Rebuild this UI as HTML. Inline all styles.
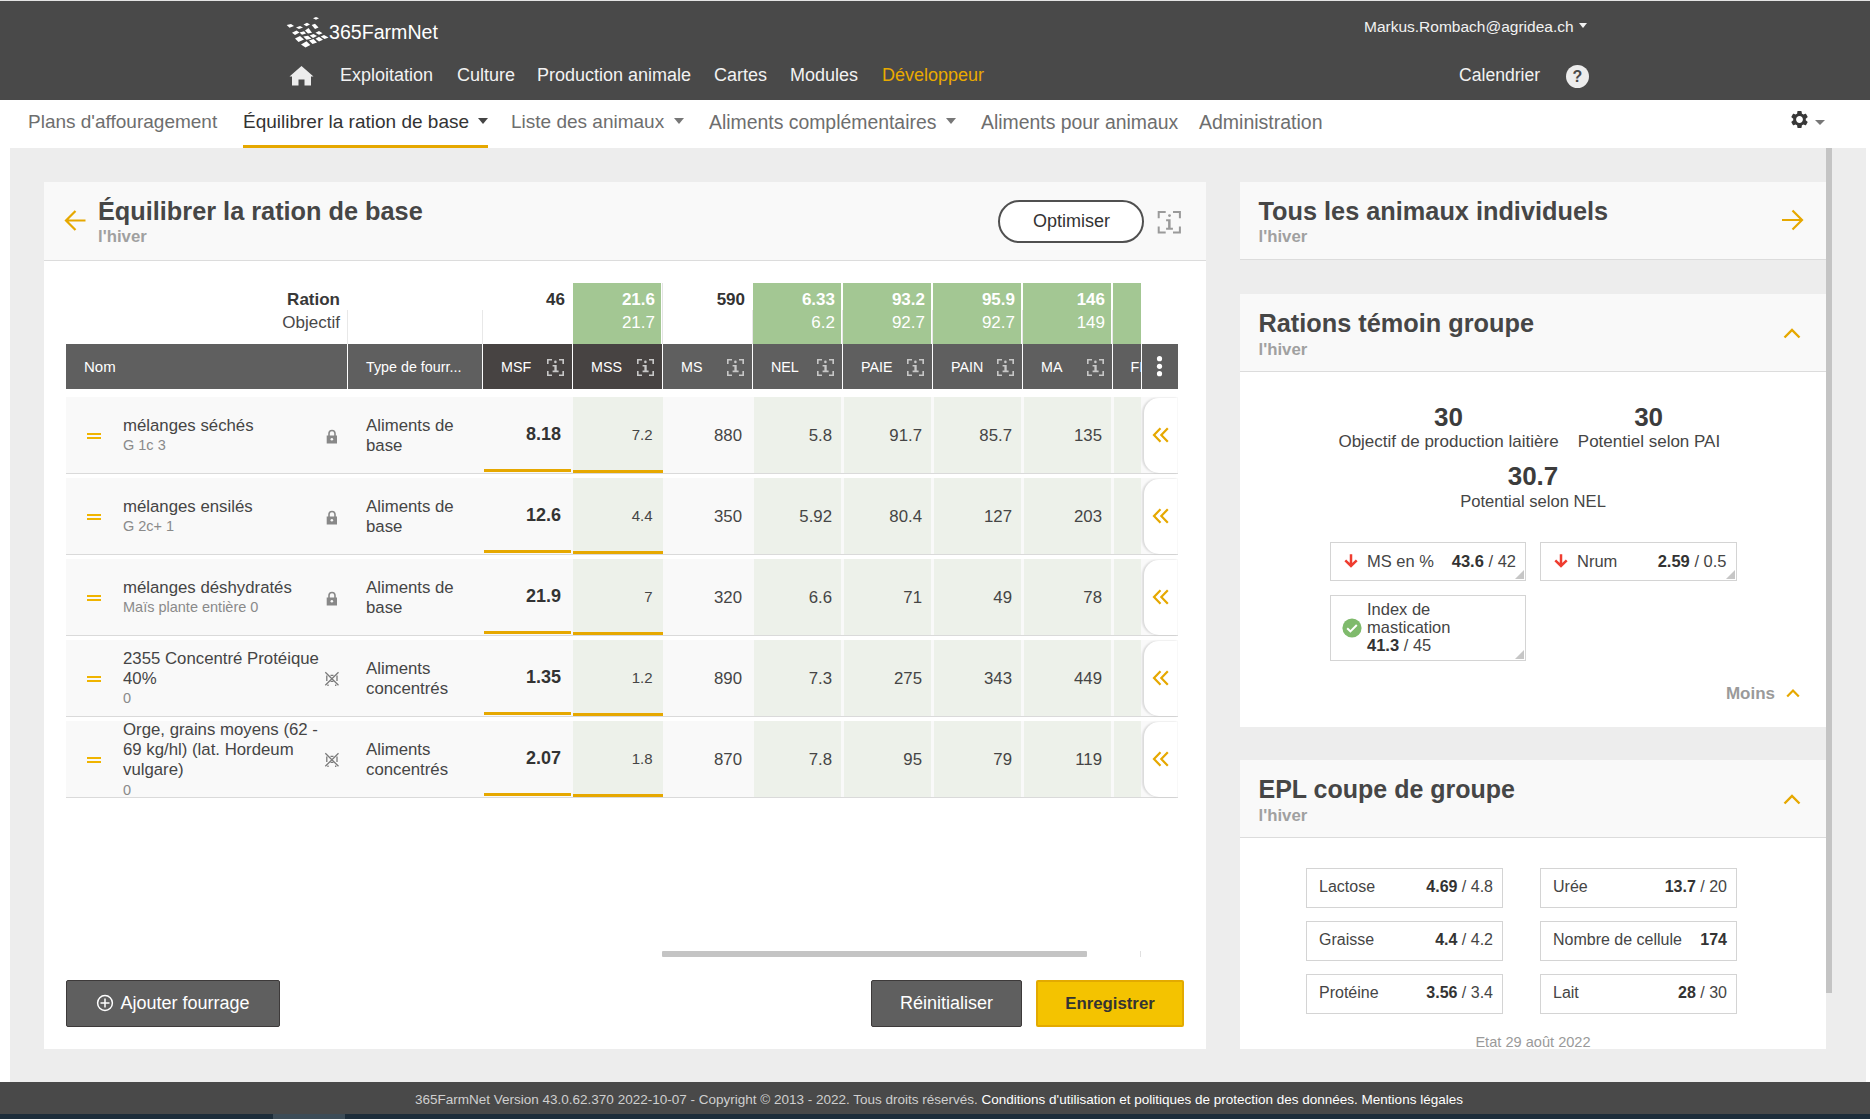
<!DOCTYPE html>
<html><head><meta charset="utf-8">
<style>
*{margin:0;padding:0;box-sizing:border-box}
html,body{width:1870px;height:1119px;overflow:hidden;background:#fff;font-family:"Liberation Sans",sans-serif;color:#444}
.a{position:absolute;white-space:nowrap}
#top{position:absolute;left:0;top:0;width:1870px;height:100px;background:#494949;border-top:1px solid #e4e4e4}
.nav{font-size:18px;color:#f2f2f2;line-height:20px}
.sub{font-size:19px;color:#6e6e6e;line-height:22px}
.caret{position:absolute;width:0;height:0;border-left:5.5px solid transparent;border-right:5.5px solid transparent;border-top:6px solid #777}
#gray{position:absolute;left:10px;top:148px;width:1856px;height:934px;background:#ededed}
#main{position:absolute;left:44px;top:182px;width:1162px;height:867px;background:#fff}
#mainhd{position:absolute;left:0;top:0;width:1162px;height:79px;background:#f9f9f9;border-bottom:1px solid #dcdcdc}
.ttl{font-size:25.3px;font-weight:700;color:#464646;line-height:30px}
.hiv{font-size:16.8px;font-weight:700;color:#a0a0a0;line-height:20px}
.card{position:absolute;left:1240px;width:586px;background:#fff}
.cardhd{position:absolute;left:0;top:0;width:586px;height:78px;background:#f9f9f9;border-bottom:1px solid #dcdcdc}
</style></head><body>
<div id="top">
  <svg class="a" style="left:284px;top:13px" width="50" height="36" viewBox="0 0 50 36"><g fill="#fff">
  <polygon points="29,4.3 32,3 35,4.3 32,5.8"/>
  <polygon points="2.7,11 7,10 10,12 5.5,13.8"/>
  <polygon points="12,13.4 16,12 19,13.5 15,15"/>
  <polygon points="19.5,10.5 23,8.7 26,10.5 22.5,12.2"/>
  <polygon points="27.7,11 31,9.7 34.5,13.5 31,15"/>
  <polygon points="8,18.7 12.5,16.5 15.5,18.5 11,21"/>
  <polygon points="15.5,18.5 20,17.3 22,19.5 18,20.8"/>
  <polygon points="21,16.5 24.5,14 28,18.7 24,19.5"/>
  <polygon points="31.5,18.7 35,17 38.5,19.3 35,20.8"/>
  <polygon points="11,24.5 16,22 20,25.5 14.5,28"/>
  <polygon points="19.3,22.5 24,21.7 27.5,24.7 22.5,25.8"/>
  <polygon points="25.7,21.5 29.5,20 33,22 29,24"/>
  <polygon points="36.7,22.5 40,21 44.5,23.5 40.5,25"/>
  <polygon points="25,26.5 29.5,25 33,28.5 28.5,30"/>
  <polygon points="31.5,24.7 35,22.7 39,25.7 35,27.5"/>
  <polygon points="17,30.5 22.5,27.2 26.3,31 21.5,33.5"/>
  </g></svg>
  <div class="a" style="left:329px;top:20px;font-size:19.6px;line-height:22px;color:#fff">365FarmNet</div>
  <svg class="a" style="left:289px;top:64px" width="25" height="21" viewBox="0 0 25 21"><path fill="#ececec" d="M12.5 1 L0.5 11.5 L3 11.5 L3 20.5 L9.5 20.5 L9.5 14.5 L15.5 14.5 L15.5 20.5 L22 20.5 L22 11.5 L24.5 11.5 Z"/></svg>
  <div class="a nav" style="left:340px;top:64px">Exploitation</div>
  <div class="a nav" style="left:457px;top:64px">Culture</div>
  <div class="a nav" style="left:537px;top:64px">Production animale</div>
  <div class="a nav" style="left:714px;top:64px">Cartes</div>
  <div class="a nav" style="left:790px;top:64px">Modules</div>
  <div class="a nav" style="left:882px;top:64px;color:#e9aa00">Développeur</div>
  <div class="a" style="left:1364px;top:17px;font-size:15.5px;line-height:18px;color:#f2f2f2">Markus.Rombach@agridea.ch</div>
  <div class="caret" style="left:1579px;top:22px;border-top-color:#f2f2f2;border-left-width:4px;border-right-width:4px;border-top-width:5px"></div>
  <div class="a nav" style="left:1459px;top:64px;font-size:17.6px">Calendrier</div>
  <div class="a" style="left:1566px;top:64px;width:23px;height:23px;border-radius:50%;background:#ececec;color:#494949;font-weight:700;font-size:16px;line-height:23px;text-align:center">?</div>
</div>
<div id="subnav">
  <div class="a sub" style="left:28px;top:111px">Plans d'affouragement</div>
  <div class="a sub" style="left:243px;top:111px;color:#333">Équilibrer la ration de base</div>
  <div class="caret" style="left:478px;top:118px;border-top-color:#444"></div>
  <div class="a" style="left:243px;top:145px;width:245px;height:3px;background:#e6a800"></div>
  <div class="a sub" style="left:511px;top:111px">Liste des animaux</div>
  <div class="caret" style="left:674px;top:118px"></div>
  <div class="a sub" style="left:709px;top:111px;font-size:19.4px">Aliments complémentaires</div>
  <div class="caret" style="left:946px;top:118px"></div>
  <div class="a sub" style="left:981px;top:111px;font-size:19.4px">Aliments pour animaux</div>
  <div class="a sub" style="left:1199px;top:111px;font-size:19.5px">Administration</div>
  <svg class="a" style="left:1789px;top:109px" width="21" height="21" viewBox="0 0 24 24"><path fill="#383838" d="M19.14 12.94c.04-.3.06-.61.06-.94 0-.32-.02-.64-.07-.94l2.03-1.58a.49.49 0 0 0 .12-.61l-1.92-3.32a.488.488 0 0 0-.59-.22l-2.39.96c-.5-.38-1.03-.7-1.62-.94l-.36-2.54a.484.484 0 0 0-.48-.41h-3.84c-.24 0-.43.17-.47.41l-.36 2.54c-.59.24-1.13.57-1.62.94l-2.39-.96c-.22-.08-.47 0-.59.22L2.74 8.87c-.12.21-.08.47.12.61l2.03 1.58c-.05.3-.09.63-.09.94s.02.64.07.94l-2.03 1.58a.49.49 0 0 0-.12.61l1.92 3.32c.12.22.37.29.59.22l2.39-.96c.5.38 1.03.7 1.62.94l.36 2.54c.05.24.24.41.48.41h3.84c.24 0 .44-.17.47-.41l.36-2.54c.59-.24 1.13-.56 1.62-.94l2.39.96c.22.08.47 0 .59-.22l1.92-3.32c.12-.22.07-.47-.12-.61l-2.01-1.58zM12 15.9c-2.15 0-3.9-1.75-3.9-3.9s1.75-3.9 3.9-3.9 3.9 1.75 3.9 3.9-1.75 3.9-3.9 3.9z"/></svg>
  <div class="caret" style="left:1815px;top:120px;border-left-width:5px;border-right-width:5px;border-top-width:5px"></div>
</div>
<div id="gray"></div>
<div id="main">
  <div id="mainhd">
    <svg class="a" style="left:20px;top:27px" width="23" height="23" viewBox="0 0 23 23"><path d="M11.5 2 L2 11.5 L11.5 21 M2 11.5 L21.5 11.5" stroke="#e6a800" stroke-width="2.2" fill="none"/></svg>
    <div class="a ttl" style="left:54px;top:14px">Équilibrer la ration de base</div>
    <div class="a hiv" style="left:54px;top:45px">l'hiver</div>
    <div class="a" style="left:954px;top:18px;width:146px;height:43px;border:2px solid #505050;border-radius:22px;background:#fff;font-size:18px;line-height:39px;text-align:center;color:#333;padding-left:1px">Optimiser</div>
    <svg class="a" style="left:1113px;top:28px" width="25" height="25" viewBox="0 0 25 25"><g fill="none" stroke="#9a9a9a" stroke-width="2"><path d="M1.7 8.2V1.9h7M16 1.9h6.9v6.3M22.9 16.4v6.1H16M8.7 22.5H1.7v-6.1"/></g><g fill="#9a9a9a"><circle cx="12.5" cy="5.6" r="1.4"/><path d="M9.1 9.2h4.5v8.5h2.3v2H9.1v-2h2V11.2h-2z"/></g></svg>
  </div>
</div>
<div class="a" style="left:-60px;width:400px;text-align:right;top:288.61px;font-size:17px;line-height:21px;color:#383838;font-weight:700">Ration</div>
<div class="a" style="left:-60px;width:400px;text-align:right;top:311.61px;font-size:17px;line-height:21px;color:#484848">Objectif</div>
<div class="a" style="left:347px;top:310px;width:1px;height:34px;background:#e8e8e8"></div>
<div class="a" style="left:482px;top:310px;width:1px;height:34px;background:#e8e8e8"></div>
<div class="a" style="left:752px;top:310px;width:1px;height:34px;background:#e8e8e8"></div>
<div class="a" style="left:842px;top:310px;width:1px;height:34px;background:#e8e8e8"></div>
<div class="a" style="left:932px;top:310px;width:1px;height:34px;background:#e8e8e8"></div>
<div class="a" style="left:1022px;top:310px;width:1px;height:34px;background:#e8e8e8"></div>
<div class="a" style="left:1112px;top:310px;width:1px;height:34px;background:#e8e8e8"></div>
<div class="a" style="left:662px;top:283px;width:1px;height:61px;background:#e4e4e4"></div>
<div class="a" style="left:165px;width:400px;text-align:right;top:288.61px;font-size:17px;line-height:21px;color:#333;font-weight:700">46</div>
<div class="a" style="left:573px;top:283px;width:88px;height:61px;background:#a3c793"></div>
<div class="a" style="left:255px;width:400px;text-align:right;top:288.61px;font-size:17px;line-height:21px;color:#fff;font-weight:700">21.6</div>
<div class="a" style="left:255px;width:400px;text-align:right;top:311.61px;font-size:17px;line-height:21px;color:#fff">21.7</div>
<div class="a" style="left:345px;width:400px;text-align:right;top:288.61px;font-size:17px;line-height:21px;color:#333;font-weight:700">590</div>
<div class="a" style="left:753px;top:283px;width:88px;height:61px;background:#a3c793"></div>
<div class="a" style="left:435px;width:400px;text-align:right;top:288.61px;font-size:17px;line-height:21px;color:#fff;font-weight:700">6.33</div>
<div class="a" style="left:435px;width:400px;text-align:right;top:311.61px;font-size:17px;line-height:21px;color:#fff">6.2</div>
<div class="a" style="left:843px;top:283px;width:88px;height:61px;background:#a3c793"></div>
<div class="a" style="left:525px;width:400px;text-align:right;top:288.61px;font-size:17px;line-height:21px;color:#fff;font-weight:700">93.2</div>
<div class="a" style="left:525px;width:400px;text-align:right;top:311.61px;font-size:17px;line-height:21px;color:#fff">92.7</div>
<div class="a" style="left:933px;top:283px;width:88px;height:61px;background:#a3c793"></div>
<div class="a" style="left:615px;width:400px;text-align:right;top:288.61px;font-size:17px;line-height:21px;color:#fff;font-weight:700">95.9</div>
<div class="a" style="left:615px;width:400px;text-align:right;top:311.61px;font-size:17px;line-height:21px;color:#fff">92.7</div>
<div class="a" style="left:1023px;top:283px;width:88px;height:61px;background:#a3c793"></div>
<div class="a" style="left:705px;width:400px;text-align:right;top:288.61px;font-size:17px;line-height:21px;color:#fff;font-weight:700">146</div>
<div class="a" style="left:705px;width:400px;text-align:right;top:311.61px;font-size:17px;line-height:21px;color:#fff">149</div>
<div class="a" style="left:1113px;top:283px;width:28px;height:61px;background:#a3c793"></div>
<div class="a" style="left:66px;top:344px;width:281px;height:45px;background:#5f5f5f"></div>
<div class="a" style="left:348px;top:344px;width:134px;height:45px;background:#5f5f5f"></div>
<div class="a" style="left:483px;top:344px;width:89px;height:45px;background:#474342;overflow:hidden"></div>
<div class="a" style="left:501px;top:358.05px;font-size:14.3px;line-height:18px;color:#fff">MSF</div>
<svg class="a" style="left:547px;top:359px" width="17" height="17" viewBox="0 0 17 17"><g fill="none" stroke="#c8c8c8" stroke-width="1.6"><path d="M0.8 5V0.8H5M12 0.8h4.2V5M16.2 12v4.2H12M5 16.2H0.8V12"/></g><g fill="#c8c8c8"><circle cx="8.4" cy="2.9" r="1.3"/><path d="M5.6 5.9h4.1v5.6h1.9v1.8H5.6v-1.8h1.8V7.6H5.6z"/></g></svg>
<div class="a" style="left:573px;top:344px;width:89px;height:45px;background:#474342;overflow:hidden"></div>
<div class="a" style="left:591px;top:358.05px;font-size:14.3px;line-height:18px;color:#fff">MSS</div>
<svg class="a" style="left:637px;top:359px" width="17" height="17" viewBox="0 0 17 17"><g fill="none" stroke="#c8c8c8" stroke-width="1.6"><path d="M0.8 5V0.8H5M12 0.8h4.2V5M16.2 12v4.2H12M5 16.2H0.8V12"/></g><g fill="#c8c8c8"><circle cx="8.4" cy="2.9" r="1.3"/><path d="M5.6 5.9h4.1v5.6h1.9v1.8H5.6v-1.8h1.8V7.6H5.6z"/></g></svg>
<div class="a" style="left:663px;top:344px;width:89px;height:45px;background:#5f5f5f;overflow:hidden"></div>
<div class="a" style="left:681px;top:358.05px;font-size:14.3px;line-height:18px;color:#fff">MS</div>
<svg class="a" style="left:727px;top:359px" width="17" height="17" viewBox="0 0 17 17"><g fill="none" stroke="#c8c8c8" stroke-width="1.6"><path d="M0.8 5V0.8H5M12 0.8h4.2V5M16.2 12v4.2H12M5 16.2H0.8V12"/></g><g fill="#c8c8c8"><circle cx="8.4" cy="2.9" r="1.3"/><path d="M5.6 5.9h4.1v5.6h1.9v1.8H5.6v-1.8h1.8V7.6H5.6z"/></g></svg>
<div class="a" style="left:753px;top:344px;width:89px;height:45px;background:#5f5f5f;overflow:hidden"></div>
<div class="a" style="left:771px;top:358.05px;font-size:14.3px;line-height:18px;color:#fff">NEL</div>
<svg class="a" style="left:817px;top:359px" width="17" height="17" viewBox="0 0 17 17"><g fill="none" stroke="#c8c8c8" stroke-width="1.6"><path d="M0.8 5V0.8H5M12 0.8h4.2V5M16.2 12v4.2H12M5 16.2H0.8V12"/></g><g fill="#c8c8c8"><circle cx="8.4" cy="2.9" r="1.3"/><path d="M5.6 5.9h4.1v5.6h1.9v1.8H5.6v-1.8h1.8V7.6H5.6z"/></g></svg>
<div class="a" style="left:843px;top:344px;width:89px;height:45px;background:#5f5f5f;overflow:hidden"></div>
<div class="a" style="left:861px;top:358.05px;font-size:14.3px;line-height:18px;color:#fff">PAIE</div>
<svg class="a" style="left:907px;top:359px" width="17" height="17" viewBox="0 0 17 17"><g fill="none" stroke="#c8c8c8" stroke-width="1.6"><path d="M0.8 5V0.8H5M12 0.8h4.2V5M16.2 12v4.2H12M5 16.2H0.8V12"/></g><g fill="#c8c8c8"><circle cx="8.4" cy="2.9" r="1.3"/><path d="M5.6 5.9h4.1v5.6h1.9v1.8H5.6v-1.8h1.8V7.6H5.6z"/></g></svg>
<div class="a" style="left:933px;top:344px;width:89px;height:45px;background:#5f5f5f;overflow:hidden"></div>
<div class="a" style="left:951px;top:358.05px;font-size:14.3px;line-height:18px;color:#fff">PAIN</div>
<svg class="a" style="left:997px;top:359px" width="17" height="17" viewBox="0 0 17 17"><g fill="none" stroke="#c8c8c8" stroke-width="1.6"><path d="M0.8 5V0.8H5M12 0.8h4.2V5M16.2 12v4.2H12M5 16.2H0.8V12"/></g><g fill="#c8c8c8"><circle cx="8.4" cy="2.9" r="1.3"/><path d="M5.6 5.9h4.1v5.6h1.9v1.8H5.6v-1.8h1.8V7.6H5.6z"/></g></svg>
<div class="a" style="left:1023px;top:344px;width:89px;height:45px;background:#5f5f5f;overflow:hidden"></div>
<div class="a" style="left:1041px;top:358.05px;font-size:14.3px;line-height:18px;color:#fff">MA</div>
<svg class="a" style="left:1087px;top:359px" width="17" height="17" viewBox="0 0 17 17"><g fill="none" stroke="#c8c8c8" stroke-width="1.6"><path d="M0.8 5V0.8H5M12 0.8h4.2V5M16.2 12v4.2H12M5 16.2H0.8V12"/></g><g fill="#c8c8c8"><circle cx="8.4" cy="2.9" r="1.3"/><path d="M5.6 5.9h4.1v5.6h1.9v1.8H5.6v-1.8h1.8V7.6H5.6z"/></g></svg>
<div class="a" style="left:1113px;top:344px;width:28px;height:45px;background:#5f5f5f;overflow:hidden"></div>
<div class="a" style="left:1113px;top:344px;width:28px;height:45px;overflow:hidden"><div class="a" style="left:17.5px;top:14.05px;font-size:14.3px;line-height:18px;color:#fff">FI</div></div>
<div class="a" style="left:1142px;top:344px;width:36px;height:45px;background:#5f5f5f"></div>
<svg class="a" style="left:1150px;top:350px" width="20" height="30" viewBox="0 0 20 30"><g fill="#fff"><circle cx="9.5" cy="8.7" r="2.6"/><circle cx="9.5" cy="16.3" r="2.6"/><circle cx="9.5" cy="23.7" r="2.6"/></g></svg>
<div class="a" style="left:84px;top:357.30px;font-size:15px;line-height:19px;color:#fff">Nom</div>
<div class="a" style="left:366px;top:358.05px;font-size:14.3px;line-height:18px;color:#fff">Type de fourr...</div>
<div class="a" style="left:66px;top:397px;width:1112px;height:76px;background:#f9f9f9"></div>
<div class="a" style="left:66px;top:473px;width:1112px;height:1px;background:#dadada"></div>
<div class="a" style="left:573px;top:397px;width:90px;height:76px;background:#edf1ea"></div>
<div class="a" style="left:754px;top:397px;width:87px;height:76px;background:#edf1ea"></div>
<div class="a" style="left:844px;top:397px;width:87px;height:76px;background:#edf1ea"></div>
<div class="a" style="left:934px;top:397px;width:87px;height:76px;background:#edf1ea"></div>
<div class="a" style="left:1024px;top:397px;width:87px;height:76px;background:#edf1ea"></div>
<div class="a" style="left:1114px;top:397px;width:27px;height:76px;background:#edf1ea"></div>
<div class="a" style="left:484px;top:469px;width:87px;height:3px;background:#e6a800"></div>
<div class="a" style="left:573px;top:470px;width:90px;height:3px;background:#e6a800"></div>
<div class="a" style="left:87px;top:433px;width:14px;height:2px;background:#f0b400"></div>
<div class="a" style="left:87px;top:437px;width:14px;height:2px;background:#f0b400"></div>
<div class="a" style="left:123px;top:414.68px;font-size:16.8px;line-height:21px;color:#454545">mélanges séchés</div>
<div class="a" style="left:123px;top:435.68px;font-size:14.5px;line-height:18px;color:#8a8a8a">G 1c 3</div>
<svg class="a" style="left:326px;top:429px" width="12" height="15" viewBox="0 0 12 15"><path d="M3 7V4.5a3 3 0 0 1 6 0V7" fill="none" stroke="#888" stroke-width="1.6"/><rect x="0.7" y="6.5" width="10.3" height="8" fill="#888"/><circle cx="5.85" cy="10.3" r="1.3" fill="#f9f9f9"/></svg>
<div class="a" style="left:366px;top:414.98px;font-size:16.8px;line-height:21px;color:#454545">Aliments de</div>
<div class="a" style="left:366px;top:434.68px;font-size:16.8px;line-height:21px;color:#454545">base</div>
<div class="a" style="left:161px;width:400px;text-align:right;top:423.16px;font-size:18px;line-height:22px;color:#333;font-weight:700">8.18</div>
<div class="a" style="left:252.5px;width:400px;text-align:right;top:425.00px;font-size:15px;line-height:19px;color:#454545">7.2</div>
<div class="a" style="left:342px;width:400px;text-align:right;top:424.68px;font-size:16.8px;line-height:21px;color:#454545">880</div>
<div class="a" style="left:432px;width:400px;text-align:right;top:424.68px;font-size:16.8px;line-height:21px;color:#454545">5.8</div>
<div class="a" style="left:522px;width:400px;text-align:right;top:424.68px;font-size:16.8px;line-height:21px;color:#454545">91.7</div>
<div class="a" style="left:612px;width:400px;text-align:right;top:424.68px;font-size:16.8px;line-height:21px;color:#454545">85.7</div>
<div class="a" style="left:702px;width:400px;text-align:right;top:424.68px;font-size:16.8px;line-height:21px;color:#454545">135</div>
<div class="a" style="left:1144px;top:398px;width:33px;height:75px;background:#fff;border-radius:15px 0 0 15px;box-shadow:-1.5px 0 2px rgba(0,0,0,0.12)"></div>
<svg class="a" style="left:1152px;top:427px" width="18" height="16" viewBox="0 0 18 16"><path d="M8.5 1.2L2 8l6.5 6.8M15.8 1.2L9.3 8l6.5 6.8" fill="none" stroke="#e6a800" stroke-width="2.2"/></svg>
<div class="a" style="left:66px;top:478px;width:1112px;height:76px;background:#f9f9f9"></div>
<div class="a" style="left:66px;top:554px;width:1112px;height:1px;background:#dadada"></div>
<div class="a" style="left:573px;top:478px;width:90px;height:76px;background:#edf1ea"></div>
<div class="a" style="left:754px;top:478px;width:87px;height:76px;background:#edf1ea"></div>
<div class="a" style="left:844px;top:478px;width:87px;height:76px;background:#edf1ea"></div>
<div class="a" style="left:934px;top:478px;width:87px;height:76px;background:#edf1ea"></div>
<div class="a" style="left:1024px;top:478px;width:87px;height:76px;background:#edf1ea"></div>
<div class="a" style="left:1114px;top:478px;width:27px;height:76px;background:#edf1ea"></div>
<div class="a" style="left:484px;top:550px;width:87px;height:3px;background:#e6a800"></div>
<div class="a" style="left:573px;top:551px;width:90px;height:3px;background:#e6a800"></div>
<div class="a" style="left:87px;top:514px;width:14px;height:2px;background:#f0b400"></div>
<div class="a" style="left:87px;top:518px;width:14px;height:2px;background:#f0b400"></div>
<div class="a" style="left:123px;top:495.68px;font-size:16.8px;line-height:21px;color:#454545">mélanges ensilés</div>
<div class="a" style="left:123px;top:516.68px;font-size:14.5px;line-height:18px;color:#8a8a8a">G 2c+ 1</div>
<svg class="a" style="left:326px;top:510px" width="12" height="15" viewBox="0 0 12 15"><path d="M3 7V4.5a3 3 0 0 1 6 0V7" fill="none" stroke="#888" stroke-width="1.6"/><rect x="0.7" y="6.5" width="10.3" height="8" fill="#888"/><circle cx="5.85" cy="10.3" r="1.3" fill="#f9f9f9"/></svg>
<div class="a" style="left:366px;top:495.98px;font-size:16.8px;line-height:21px;color:#454545">Aliments de</div>
<div class="a" style="left:366px;top:515.68px;font-size:16.8px;line-height:21px;color:#454545">base</div>
<div class="a" style="left:161px;width:400px;text-align:right;top:504.16px;font-size:18px;line-height:22px;color:#333;font-weight:700">12.6</div>
<div class="a" style="left:252.5px;width:400px;text-align:right;top:506.00px;font-size:15px;line-height:19px;color:#454545">4.4</div>
<div class="a" style="left:342px;width:400px;text-align:right;top:505.68px;font-size:16.8px;line-height:21px;color:#454545">350</div>
<div class="a" style="left:432px;width:400px;text-align:right;top:505.68px;font-size:16.8px;line-height:21px;color:#454545">5.92</div>
<div class="a" style="left:522px;width:400px;text-align:right;top:505.68px;font-size:16.8px;line-height:21px;color:#454545">80.4</div>
<div class="a" style="left:612px;width:400px;text-align:right;top:505.68px;font-size:16.8px;line-height:21px;color:#454545">127</div>
<div class="a" style="left:702px;width:400px;text-align:right;top:505.68px;font-size:16.8px;line-height:21px;color:#454545">203</div>
<div class="a" style="left:1144px;top:479px;width:33px;height:75px;background:#fff;border-radius:15px 0 0 15px;box-shadow:-1.5px 0 2px rgba(0,0,0,0.12)"></div>
<svg class="a" style="left:1152px;top:508px" width="18" height="16" viewBox="0 0 18 16"><path d="M8.5 1.2L2 8l6.5 6.8M15.8 1.2L9.3 8l6.5 6.8" fill="none" stroke="#e6a800" stroke-width="2.2"/></svg>
<div class="a" style="left:66px;top:559px;width:1112px;height:76px;background:#f9f9f9"></div>
<div class="a" style="left:66px;top:635px;width:1112px;height:1px;background:#dadada"></div>
<div class="a" style="left:573px;top:559px;width:90px;height:76px;background:#edf1ea"></div>
<div class="a" style="left:754px;top:559px;width:87px;height:76px;background:#edf1ea"></div>
<div class="a" style="left:844px;top:559px;width:87px;height:76px;background:#edf1ea"></div>
<div class="a" style="left:934px;top:559px;width:87px;height:76px;background:#edf1ea"></div>
<div class="a" style="left:1024px;top:559px;width:87px;height:76px;background:#edf1ea"></div>
<div class="a" style="left:1114px;top:559px;width:27px;height:76px;background:#edf1ea"></div>
<div class="a" style="left:484px;top:631px;width:87px;height:3px;background:#e6a800"></div>
<div class="a" style="left:573px;top:632px;width:90px;height:3px;background:#e6a800"></div>
<div class="a" style="left:87px;top:595px;width:14px;height:2px;background:#f0b400"></div>
<div class="a" style="left:87px;top:599px;width:14px;height:2px;background:#f0b400"></div>
<div class="a" style="left:123px;top:576.68px;font-size:16.8px;line-height:21px;color:#454545">mélanges déshydratés</div>
<div class="a" style="left:123px;top:597.68px;font-size:14.5px;line-height:18px;color:#8a8a8a">Maïs plante entière 0</div>
<svg class="a" style="left:326px;top:591px" width="12" height="15" viewBox="0 0 12 15"><path d="M3 7V4.5a3 3 0 0 1 6 0V7" fill="none" stroke="#888" stroke-width="1.6"/><rect x="0.7" y="6.5" width="10.3" height="8" fill="#888"/><circle cx="5.85" cy="10.3" r="1.3" fill="#f9f9f9"/></svg>
<div class="a" style="left:366px;top:576.98px;font-size:16.8px;line-height:21px;color:#454545">Aliments de</div>
<div class="a" style="left:366px;top:596.68px;font-size:16.8px;line-height:21px;color:#454545">base</div>
<div class="a" style="left:161px;width:400px;text-align:right;top:585.16px;font-size:18px;line-height:22px;color:#333;font-weight:700">21.9</div>
<div class="a" style="left:252.5px;width:400px;text-align:right;top:587.00px;font-size:15px;line-height:19px;color:#454545">7</div>
<div class="a" style="left:342px;width:400px;text-align:right;top:586.68px;font-size:16.8px;line-height:21px;color:#454545">320</div>
<div class="a" style="left:432px;width:400px;text-align:right;top:586.68px;font-size:16.8px;line-height:21px;color:#454545">6.6</div>
<div class="a" style="left:522px;width:400px;text-align:right;top:586.68px;font-size:16.8px;line-height:21px;color:#454545">71</div>
<div class="a" style="left:612px;width:400px;text-align:right;top:586.68px;font-size:16.8px;line-height:21px;color:#454545">49</div>
<div class="a" style="left:702px;width:400px;text-align:right;top:586.68px;font-size:16.8px;line-height:21px;color:#454545">78</div>
<div class="a" style="left:1144px;top:560px;width:33px;height:75px;background:#fff;border-radius:15px 0 0 15px;box-shadow:-1.5px 0 2px rgba(0,0,0,0.12)"></div>
<svg class="a" style="left:1152px;top:589px" width="18" height="16" viewBox="0 0 18 16"><path d="M8.5 1.2L2 8l6.5 6.8M15.8 1.2L9.3 8l6.5 6.8" fill="none" stroke="#e6a800" stroke-width="2.2"/></svg>
<div class="a" style="left:66px;top:640px;width:1112px;height:76px;background:#f9f9f9"></div>
<div class="a" style="left:66px;top:716px;width:1112px;height:1px;background:#dadada"></div>
<div class="a" style="left:573px;top:640px;width:90px;height:76px;background:#edf1ea"></div>
<div class="a" style="left:754px;top:640px;width:87px;height:76px;background:#edf1ea"></div>
<div class="a" style="left:844px;top:640px;width:87px;height:76px;background:#edf1ea"></div>
<div class="a" style="left:934px;top:640px;width:87px;height:76px;background:#edf1ea"></div>
<div class="a" style="left:1024px;top:640px;width:87px;height:76px;background:#edf1ea"></div>
<div class="a" style="left:1114px;top:640px;width:27px;height:76px;background:#edf1ea"></div>
<div class="a" style="left:484px;top:712px;width:87px;height:3px;background:#e6a800"></div>
<div class="a" style="left:573px;top:713px;width:90px;height:3px;background:#e6a800"></div>
<div class="a" style="left:87px;top:676px;width:14px;height:2px;background:#f0b400"></div>
<div class="a" style="left:87px;top:680px;width:14px;height:2px;background:#f0b400"></div>
<div class="a" style="left:123px;top:647.88px;font-size:16.8px;line-height:21px;color:#454545">2355 Concentré Protéique</div>
<div class="a" style="left:123px;top:667.68px;font-size:16.8px;line-height:21px;color:#454545">40%</div>
<div class="a" style="left:123px;top:688.98px;font-size:14.5px;line-height:18px;color:#8a8a8a">0</div>
<svg class="a" style="left:324px;top:671px" width="16" height="16" viewBox="0 0 16 16"><g stroke="#7a7a7a" stroke-width="1.3" fill="none"><path d="M1.3 1.3L14.5 14.3M14.5 1.3L1.3 14.3"/><path d="M2.8 4.5v5.5M13 4.5v5.5M6.5 4.3h3M6.5 10.3h3M4 13.5v1.5M11.7 13.5v1.5"/></g></svg>
<div class="a" style="left:366px;top:657.98px;font-size:16.8px;line-height:21px;color:#454545">Aliments</div>
<div class="a" style="left:366px;top:677.68px;font-size:16.8px;line-height:21px;color:#454545">concentrés</div>
<div class="a" style="left:161px;width:400px;text-align:right;top:666.16px;font-size:18px;line-height:22px;color:#333;font-weight:700">1.35</div>
<div class="a" style="left:252.5px;width:400px;text-align:right;top:668.00px;font-size:15px;line-height:19px;color:#454545">1.2</div>
<div class="a" style="left:342px;width:400px;text-align:right;top:667.68px;font-size:16.8px;line-height:21px;color:#454545">890</div>
<div class="a" style="left:432px;width:400px;text-align:right;top:667.68px;font-size:16.8px;line-height:21px;color:#454545">7.3</div>
<div class="a" style="left:522px;width:400px;text-align:right;top:667.68px;font-size:16.8px;line-height:21px;color:#454545">275</div>
<div class="a" style="left:612px;width:400px;text-align:right;top:667.68px;font-size:16.8px;line-height:21px;color:#454545">343</div>
<div class="a" style="left:702px;width:400px;text-align:right;top:667.68px;font-size:16.8px;line-height:21px;color:#454545">449</div>
<div class="a" style="left:1144px;top:641px;width:33px;height:75px;background:#fff;border-radius:15px 0 0 15px;box-shadow:-1.5px 0 2px rgba(0,0,0,0.12)"></div>
<svg class="a" style="left:1152px;top:670px" width="18" height="16" viewBox="0 0 18 16"><path d="M8.5 1.2L2 8l6.5 6.8M15.8 1.2L9.3 8l6.5 6.8" fill="none" stroke="#e6a800" stroke-width="2.2"/></svg>
<div class="a" style="left:66px;top:721px;width:1112px;height:76px;background:#f9f9f9"></div>
<div class="a" style="left:66px;top:797px;width:1112px;height:1px;background:#dadada"></div>
<div class="a" style="left:573px;top:721px;width:90px;height:76px;background:#edf1ea"></div>
<div class="a" style="left:754px;top:721px;width:87px;height:76px;background:#edf1ea"></div>
<div class="a" style="left:844px;top:721px;width:87px;height:76px;background:#edf1ea"></div>
<div class="a" style="left:934px;top:721px;width:87px;height:76px;background:#edf1ea"></div>
<div class="a" style="left:1024px;top:721px;width:87px;height:76px;background:#edf1ea"></div>
<div class="a" style="left:1114px;top:721px;width:27px;height:76px;background:#edf1ea"></div>
<div class="a" style="left:484px;top:793px;width:87px;height:3px;background:#e6a800"></div>
<div class="a" style="left:573px;top:794px;width:90px;height:3px;background:#e6a800"></div>
<div class="a" style="left:87px;top:757px;width:14px;height:2px;background:#f0b400"></div>
<div class="a" style="left:87px;top:761px;width:14px;height:2px;background:#f0b400"></div>
<div class="a" style="left:123px;top:719.08px;font-size:16.8px;line-height:21px;color:#454545">Orge, grains moyens (62 -</div>
<div class="a" style="left:123px;top:738.98px;font-size:16.8px;line-height:21px;color:#454545">69 kg/hl) (lat. Hordeum</div>
<div class="a" style="left:123px;top:758.58px;font-size:16.8px;line-height:21px;color:#454545">vulgare)</div>
<div class="a" style="left:123px;top:780.78px;font-size:14.5px;line-height:18px;color:#8a8a8a">0</div>
<svg class="a" style="left:324px;top:752px" width="16" height="16" viewBox="0 0 16 16"><g stroke="#7a7a7a" stroke-width="1.3" fill="none"><path d="M1.3 1.3L14.5 14.3M14.5 1.3L1.3 14.3"/><path d="M2.8 4.5v5.5M13 4.5v5.5M6.5 4.3h3M6.5 10.3h3M4 13.5v1.5M11.7 13.5v1.5"/></g></svg>
<div class="a" style="left:366px;top:738.98px;font-size:16.8px;line-height:21px;color:#454545">Aliments</div>
<div class="a" style="left:366px;top:758.68px;font-size:16.8px;line-height:21px;color:#454545">concentrés</div>
<div class="a" style="left:161px;width:400px;text-align:right;top:747.16px;font-size:18px;line-height:22px;color:#333;font-weight:700">2.07</div>
<div class="a" style="left:252.5px;width:400px;text-align:right;top:749.00px;font-size:15px;line-height:19px;color:#454545">1.8</div>
<div class="a" style="left:342px;width:400px;text-align:right;top:748.68px;font-size:16.8px;line-height:21px;color:#454545">870</div>
<div class="a" style="left:432px;width:400px;text-align:right;top:748.68px;font-size:16.8px;line-height:21px;color:#454545">7.8</div>
<div class="a" style="left:522px;width:400px;text-align:right;top:748.68px;font-size:16.8px;line-height:21px;color:#454545">95</div>
<div class="a" style="left:612px;width:400px;text-align:right;top:748.68px;font-size:16.8px;line-height:21px;color:#454545">79</div>
<div class="a" style="left:702px;width:400px;text-align:right;top:748.68px;font-size:16.8px;line-height:21px;color:#454545">119</div>
<div class="a" style="left:1144px;top:722px;width:33px;height:75px;background:#fff;border-radius:15px 0 0 15px;box-shadow:-1.5px 0 2px rgba(0,0,0,0.12)"></div>
<svg class="a" style="left:1152px;top:751px" width="18" height="16" viewBox="0 0 18 16"><path d="M8.5 1.2L2 8l6.5 6.8M15.8 1.2L9.3 8l6.5 6.8" fill="none" stroke="#e6a800" stroke-width="2.2"/></svg>
<div class="a" style="left:662px;top:951px;width:425px;height:6px;background:#c4c4c4;border-radius:1px"></div>
<div class="a" style="left:1140px;top:951px;width:1px;height:6px;background:#e0e0e0"></div>
<div class="a" style="left:66px;top:980px;width:214px;height:47px;background:#5f5f5f;border:1px solid #3d3a3a;border-radius:2px"></div>
<svg class="a" style="left:96px;top:993px" width="19" height="19" viewBox="0 0 19 19"><circle cx="9" cy="10" r="7.4" fill="none" stroke="#fff" stroke-width="1.5"/><path d="M9 5.5v9M4.5 10h9" stroke="#fff" stroke-width="1.5"/></svg>
<div class="a" style="left:120.5px;top:991.76px;font-size:18px;line-height:22px;color:#fff">Ajouter fourrage</div>
<div class="a" style="left:871px;top:980px;width:151px;height:47px;background:#5f5f5f;border:1px solid #3d3a3a;border-radius:2px"></div>
<div class="a" style="left:646.5px;width:600px;text-align:center;top:991.76px;font-size:18px;line-height:22px;color:#fff">Réinitialiser</div>
<div class="a" style="left:1036px;top:980px;width:148px;height:47px;background:#f4c300;border:2px solid #e3aa00;border-radius:2px"></div>
<div class="a" style="left:810px;width:600px;text-align:center;top:992.68px;font-size:16.8px;line-height:21px;color:#333;font-weight:700">Enregistrer</div>
<div class="card" style="top:182px;height:78px"><div class="cardhd"></div></div>
<div class="card" style="top:294px;height:433px"><div class="cardhd"></div></div>
<div class="card" style="top:760px;height:289px"><div class="cardhd"></div></div>
<div class="a" style="left:1826px;top:148px;width:6px;height:845px;background:#c4c4c4"></div>
<div class="a" style="left:0;top:1082px;width:1870px;height:32px;background:#494949"></div>
<div class="a" style="left:1258.5px;top:195.23px;font-size:25.3px;line-height:32px;color:#464646;font-weight:700">Tous les animaux individuels</div>
<div class="a" style="left:1258.5px;top:225.68px;font-size:16.8px;line-height:21px;color:#a0a0a0;font-weight:700">l'hiver</div>
<svg class="a" style="left:1780px;top:208px" width="24" height="24" viewBox="0 0 24 24"><path d="M12.5 2.5L22 12l-9.5 9.5M22 12H2" stroke="#e6a800" stroke-width="2.2" fill="none"/></svg>
<div class="a" style="left:1258.5px;top:307.23px;font-size:25.3px;line-height:32px;color:#464646;font-weight:700">Rations témoin groupe</div>
<div class="a" style="left:1258.5px;top:338.68px;font-size:16.8px;line-height:21px;color:#a0a0a0;font-weight:700">l'hiver</div>
<svg class="a" style="left:1783px;top:328px" width="18" height="11" viewBox="0 0 18 11"><path d="M1.5 9.5L9 2l7.5 7.5" fill="none" stroke="#e6a800" stroke-width="2.4"/></svg>
<div class="a" style="left:1148.5px;width:600px;text-align:center;top:400.99px;font-size:26px;line-height:32px;color:#3c3c3c;font-weight:700">30</div>
<div class="a" style="left:1148.5px;width:600px;text-align:center;top:430.61px;font-size:17px;line-height:21px;color:#454545">Objectif de production laitière</div>
<div class="a" style="left:1348.6px;width:600px;text-align:center;top:400.99px;font-size:26px;line-height:32px;color:#3c3c3c;font-weight:700">30</div>
<div class="a" style="left:1349px;width:600px;text-align:center;top:430.61px;font-size:17px;line-height:21px;color:#454545">Potentiel selon PAI</div>
<div class="a" style="left:1233px;width:600px;text-align:center;top:460.49px;font-size:26px;line-height:32px;color:#3c3c3c;font-weight:700">30.7</div>
<div class="a" style="left:1233px;width:600px;text-align:center;top:490.75px;font-size:16.6px;line-height:21px;color:#454545">Potential selon NEL</div>
<div class="a" style="left:1330px;top:542px;width:196px;height:39px;border:1px solid #d4d4d4;background:#fff"></div><svg class="a" style="left:1515px;top:570px" width="9" height="9" viewBox="0 0 9 9"><path d="M9 0V9H0Z" fill="#c6c6c6"/></svg>
<svg class="a" style="left:1344px;top:553px" width="14" height="16" viewBox="0 0 14 16"><path d="M7 1.2V13M1.3 7.3L7 13l5.7-5.7" fill="none" stroke="#ef3d30" stroke-width="2.5"/></svg>
<div class="a" style="left:1367px;top:551.28px;font-size:16.5px;line-height:21px;color:#454545">MS en %</div>
<div class="a" style="left:1116px;width:400px;text-align:right;top:551.28px;font-size:16.5px;line-height:21px;color:#454545"><b style="color:#333">43.6</b> / 42</div>
<div class="a" style="left:1540px;top:542px;width:197px;height:39px;border:1px solid #d4d4d4;background:#fff"></div><svg class="a" style="left:1726px;top:570px" width="9" height="9" viewBox="0 0 9 9"><path d="M9 0V9H0Z" fill="#c6c6c6"/></svg>
<svg class="a" style="left:1554px;top:553px" width="14" height="16" viewBox="0 0 14 16"><path d="M7 1.2V13M1.3 7.3L7 13l5.7-5.7" fill="none" stroke="#ef3d30" stroke-width="2.5"/></svg>
<div class="a" style="left:1577px;top:551.28px;font-size:16.5px;line-height:21px;color:#454545">Nrum</div>
<div class="a" style="left:1326.5px;width:400px;text-align:right;top:551.28px;font-size:16.5px;line-height:21px;color:#454545"><b style="color:#333">2.59</b> / 0.5</div>
<div class="a" style="left:1330px;top:595px;width:196px;height:66px;border:1px solid #d4d4d4;background:#fff"></div><svg class="a" style="left:1515px;top:650px" width="9" height="9" viewBox="0 0 9 9"><path d="M9 0V9H0Z" fill="#c6c6c6"/></svg>
<svg class="a" style="left:1342px;top:618px" width="20" height="20" viewBox="0 0 20 20"><circle cx="10" cy="10" r="9.6" fill="#7fba6c"/><path d="M5.2 10.2l3.2 3.2 6.4-6.4" fill="none" stroke="#fff" stroke-width="2"/></svg>
<div class="a" style="left:1367px;top:599.28px;font-size:16.5px;line-height:21px;color:#454545">Index de</div>
<div class="a" style="left:1367px;top:617.28px;font-size:16.5px;line-height:21px;color:#454545">mastication</div>
<div class="a" style="left:1367px;top:634.98px;font-size:16.5px;line-height:21px;color:#454545"><b style="color:#333">41.3</b> / 45</div>
<div class="a" style="left:1375px;width:400px;text-align:right;top:683.11px;font-size:17px;line-height:21px;color:#9a9a9a;font-weight:700">Moins</div>
<svg class="a" style="left:1786px;top:687px" width="14" height="11" viewBox="0 0 14 11"><path d="M1.2 9.5L7 3.5l5.8 6" fill="none" stroke="#e6a800" stroke-width="2.2"/></svg>
<div class="a" style="left:1258.5px;top:773.84px;font-size:25px;line-height:31px;color:#464646;font-weight:700">EPL coupe de groupe</div>
<div class="a" style="left:1258.5px;top:804.68px;font-size:16.8px;line-height:21px;color:#a0a0a0;font-weight:700">l'hiver</div>
<svg class="a" style="left:1783px;top:794px" width="18" height="11" viewBox="0 0 18 11"><path d="M1.5 9.5L9 2l7.5 7.5" fill="none" stroke="#e6a800" stroke-width="2.4"/></svg>
<div class="a" style="left:1306px;top:868px;width:197px;height:40px;border:1px solid #d4d4d4;background:#fff"></div>
<div class="a" style="left:1319px;top:877.46px;font-size:16px;line-height:20px;color:#454545">Lactose</div>
<div class="a" style="left:1093px;width:400px;text-align:right;top:877.46px;font-size:16px;line-height:20px;color:#454545"><b style="color:#333">4.69</b> / 4.8</div>
<div class="a" style="left:1540px;top:868px;width:197px;height:40px;border:1px solid #d4d4d4;background:#fff"></div>
<div class="a" style="left:1553px;top:877.46px;font-size:16px;line-height:20px;color:#454545">Urée</div>
<div class="a" style="left:1327px;width:400px;text-align:right;top:877.46px;font-size:16px;line-height:20px;color:#454545"><b style="color:#333">13.7</b> / 20</div>
<div class="a" style="left:1306px;top:921px;width:197px;height:40px;border:1px solid #d4d4d4;background:#fff"></div>
<div class="a" style="left:1319px;top:930.46px;font-size:16px;line-height:20px;color:#454545">Graisse</div>
<div class="a" style="left:1093px;width:400px;text-align:right;top:930.46px;font-size:16px;line-height:20px;color:#454545"><b style="color:#333">4.4</b> / 4.2</div>
<div class="a" style="left:1540px;top:921px;width:197px;height:40px;border:1px solid #d4d4d4;background:#fff"></div>
<div class="a" style="left:1553px;top:930.46px;font-size:16px;line-height:20px;color:#454545">Nombre de cellule</div>
<div class="a" style="left:1327px;width:400px;text-align:right;top:930.46px;font-size:16px;line-height:20px;color:#454545"><b style="color:#333">174</b></div>
<div class="a" style="left:1306px;top:974px;width:197px;height:40px;border:1px solid #d4d4d4;background:#fff"></div>
<div class="a" style="left:1319px;top:983.46px;font-size:16px;line-height:20px;color:#454545">Protéine</div>
<div class="a" style="left:1093px;width:400px;text-align:right;top:983.46px;font-size:16px;line-height:20px;color:#454545"><b style="color:#333">3.56</b> / 3.4</div>
<div class="a" style="left:1540px;top:974px;width:197px;height:40px;border:1px solid #d4d4d4;background:#fff"></div>
<div class="a" style="left:1553px;top:983.46px;font-size:16px;line-height:20px;color:#454545">Lait</div>
<div class="a" style="left:1327px;width:400px;text-align:right;top:983.46px;font-size:16px;line-height:20px;color:#454545"><b style="color:#333">28</b> / 30</div>
<div class="a" style="left:1240px;top:1030px;width:586px;height:19px;overflow:hidden"><div class="a" style="left:-7px;width:600px;text-align:center;top:2.64px;font-size:14.6px;line-height:18px;color:#9a9a9a">Etat 29 août 2022</div></div>
<div class="a" style="left:415px;top:1090.82px;font-size:13.5px;line-height:17px;color:#cfcfcf">365FarmNet Version 43.0.62.370 2022-10-07 - Copyright © 2013 - 2022. Tous droits réservés. <span style="color:#fff">Conditions d'utilisation et politiques de protection des données. Mentions légales</span></div>
<div class="a" style="left:0;top:1114px;width:1870px;height:5px;background:#1d2d3a"></div>
<div class="a" style="left:273px;top:1114px;width:72px;height:5px;background:#3d4c57"></div>
</body></html>
